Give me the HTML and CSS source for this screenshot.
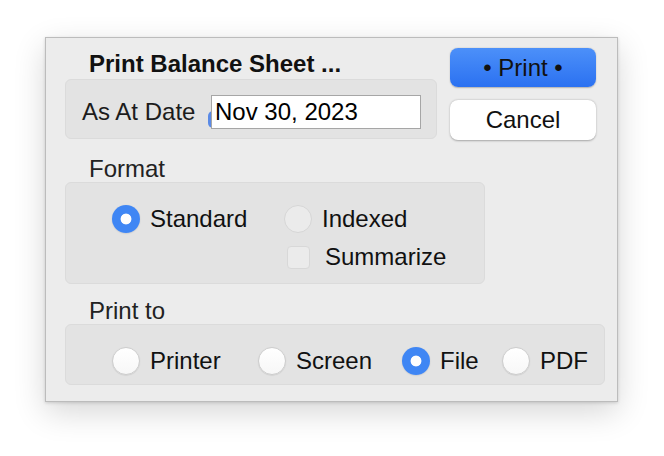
FILE: index.html
```html
<!DOCTYPE html>
<html lang="en">
<head>
    <meta charset="UTF-8">
    <meta name="viewport" content="width=device-width, initial-scale=1.0">
    <title>Print Balance Sheet</title>
    <link rel="stylesheet" href="styles.css">
</head>
<body>
    <div class="window">
        <div class="top">
            <div class="left">
                <div class="title">Print Balance Sheet ...</div>
                <div class="group date-box">
                    <span class="date-label">As At Date</span>
                    <div class="date-wrap">
                        <span class="focus-mark"></span>
                        <div class="date-input">Nov 30, 2023</div>
                    </div>
                </div>
            </div>
            <div class="buttons">
                <button class="btn btn-default">&bull; Print &bull;</button>
                <button class="btn">Cancel</button>
            </div>
        </div>

        <div class="section-label">Format</div>
        <div class="group format-box">
            <div class="option"><span class="radio checked"></span>Standard</div>
            <div class="option"><span class="radio disabled"></span>Indexed</div>
            <div class="option empty"></div>
            <div class="option"><span class="slot"><span class="checkbox"></span></span><span class="check-text">Summarize</span></div>
        </div>

        <div class="section-label">Print to</div>
        <div class="group print-box">
            <div class="option"><span class="radio"></span>Printer</div>
            <div class="option"><span class="radio"></span>Screen</div>
            <div class="option"><span class="radio checked"></span>File</div>
            <div class="option"><span class="radio"></span>PDF</div>
        </div>
    </div>
</body>
</html>
```

FILE: styles.css
```css
html {
    height: 100%;
    background-color: #ffffff;
}
body {
    margin: 0;
    min-height: 100%;
    box-sizing: border-box;
    padding: 37px 0 0 45px;
    font-family: "Liberation Sans", Arial, sans-serif;
    font-size: 24px;
    color: #1c1c1c;
}
.window {
    width: 552px;
    height: 353px;
    background-color: #ececec;
    border: 1px solid #bcbcbc;
    box-shadow: 0 10px 30px rgba(0,0,0,0.16), 0 1px 3px rgba(0,0,0,0.15);
    padding: 10px 0 0 19px;
}
.top {
    display: flex;
    align-items: flex-start;
}
.left {
    width: 372px;
}
.title {
    font-weight: bold;
    line-height: 31px;
    padding-left: 24px;
    color: #111;
}
.group {
    background-color: #e3e3e3;
    border: 1px solid #dbdbdb;
    border-radius: 6px;
    box-sizing: border-box;
}
.date-box {
    height: 60px;
    display: flex;
    align-items: center;
    padding: 6px 0 0 16px;
}
.date-label {
    width: 129px;
}
.date-wrap {
    position: relative;
}
.focus-mark {
    position: absolute;
    left: -3px;
    bottom: 1px;
    width: 9px;
    height: 17px;
    border-radius: 5px 0 0 5px;
    background-color: #5a8ae6;
}
.date-input {
    position: relative;
    width: 210px;
    height: 34px;
    box-sizing: border-box;
    border: 1px solid #a6a6a6;
    background-color: #fff;
    padding-left: 3px;
    line-height: 32px;
    color: #000;
}
.buttons {
    margin-left: 13px;
    display: flex;
    flex-direction: column;
    gap: 13px;
}
.btn {
    width: 146px;
    height: 40px;
    border: none;
    border-radius: 8px;
    background-color: #fff;
    box-shadow: 0 0.5px 2px rgba(0,0,0,0.3);
    font-family: "Liberation Sans", Arial, sans-serif;
    font-size: 24px;
    color: #111;
    padding: 0;
}
.btn-default {
    height: 39px;
    background: linear-gradient(#4c90f9, #2b71f1);
    box-shadow: 0 0.5px 1.5px rgba(0,0,0,0.25);
}
.section-label {
    line-height: 26px;
    padding-left: 24px;
    margin-top: 16px;
    color: #222;
}
.format-box {
    width: 420px;
    height: 102px;
    display: grid;
    grid-template-columns: 172px auto;
    align-content: start;
    row-gap: 10px;
    padding: 22px 0 0 46px;
}
.print-box {
    width: 540px;
    height: 61px;
    display: grid;
    grid-template-columns: 146px 144px 100px auto;
    align-content: start;
    padding: 22px 0 0 46px;
}
.format-box + .section-label {
    margin-top: 14px;
}
.option {
    display: flex;
    align-items: center;
    height: 28px;
    gap: 10px;
    color: #111;
}
.radio {
    width: 28px;
    height: 28px;
    box-sizing: border-box;
    border-radius: 50%;
    border: 1px solid #cdcdcd;
    background: linear-gradient(#ffffff, #f7f7f7);
    box-shadow: 0 0.5px 1px rgba(0,0,0,0.12);
    flex: none;
}
.radio.disabled {
    background: #ebebeb;
    border-color: #d6d6d6;
    box-shadow: none;
}
.radio.checked {
    border: none;
    background: radial-gradient(circle, #fdfdfd 0 5px, #3f86f4 5.8px);
    box-shadow: 0 0.5px 1.5px rgba(0,0,0,0.15);
}
.slot {
    width: 28px;
    display: flex;
    justify-content: center;
    flex: none;
}
.checkbox {
    width: 23px;
    height: 23px;
    box-sizing: border-box;
    border-radius: 4px;
    border: 1px solid #d8d8d8;
    background-color: #ebebeb;
}
.check-text {
    margin-left: 3px;
}
```
